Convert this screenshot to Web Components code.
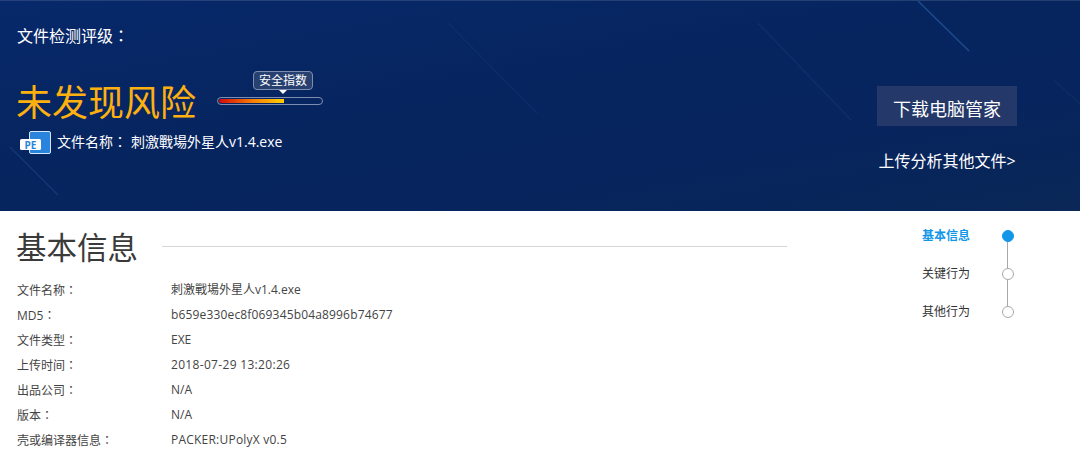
<!DOCTYPE html>
<html lang="zh-CN"><head><meta charset="utf-8"><title>文件检测</title>
<style>
html,body{margin:0;padding:0;background:#fff;overflow:hidden}
body{width:1080px;height:454px;font-family:"Open Sans","Noto Sans CJK SC",sans-serif;color:#333}
</style></head><body>
<report-page>
  <report-hero slot="hero" level="未发现风险" file="刺激戰場外星人v1.4.exe"></report-hero>
  <info-section slot="main" heading="基本信息">
    <info-row label="文件名称">刺激戰場外星人v1.4.exe</info-row>
    <info-row label="MD5" style="letter-spacing:.16px">b659e330ec8f069345b04a8996b74677</info-row>
    <info-row label="文件类型">EXE</info-row>
    <info-row label="上传时间" style="letter-spacing:.32px">2018-07-29 13:20:26</info-row>
    <info-row label="出品公司">N/A</info-row>
    <info-row label="版本">N/A</info-row>
    <info-row label="壳或编译器信息" style="letter-spacing:.22px">PACKER:UPolyX v0.5</info-row>
  </info-section>
  <step-nav slot="nav">
    <step-item active>基本信息</step-item>
    <step-item>关键行为</step-item>
    <step-item last>其他行为</step-item>
  </step-nav>
</report-page>
<script>
function def(name,html,init){
  customElements.define(name,class extends HTMLElement{
    constructor(){super();this.attachShadow({mode:'open'}).innerHTML=html;}
    connectedCallback(){if(init)init(this,this.shadowRoot);}
  });
}
const colon='font-family:"Noto Sans CJK TC",sans-serif;letter-spacing:0';
def('report-page',`<style>
:host{display:block;width:1080px;height:454px;overflow:hidden}
.body{display:flex;height:243px}
.main{width:787px}
.nav{margin-left:135px}
</style><slot name="hero"></slot><div class="body"><div class="main"><slot name="main"></slot></div><div class="nav"><slot name="nav"></slot></div></div>`);

def('report-hero',`<style>
:host{display:block;position:relative;height:211px;box-sizing:border-box;color:#fff;overflow:hidden;
background:linear-gradient(170deg,#07286a 0%,#06255f 45%,#07245e 70%,#0a2757 100%);box-shadow:inset 0 1px 0 rgba(255,255,255,.12)}
.bg{position:absolute;left:0;top:0}
.wrap{position:relative;display:flex;justify-content:space-between;height:100%;box-sizing:border-box;padding:0 63px 0 17px}
.t{font-size:16px;line-height:20px;padding-top:25px}
.c{${colon}}
.lvl{display:flex;margin-top:28px;height:58px}
.name{font-size:36px;line-height:58px;color:#feb00f;width:200px;margin-left:-1px;white-space:nowrap}
.meter{position:relative;width:106px;height:8px;margin:23px 0 0 1px;border:1px solid #7d8db0;border-radius:5px;box-sizing:border-box;padding:1px}
.fill{width:65px;height:100%;background:linear-gradient(90deg,#d40a0a,#f77a05 50%,#ffd000);border-radius:2px 0 0 2px}
.tip{position:absolute;left:35px;top:-27px;width:60px;height:19px;box-sizing:border-box;border:1px solid #7d8db0;border-radius:4px;background:#27406f;font-size:12px;line-height:17px;text-align:center;white-space:nowrap}
.tip:after{content:"";position:absolute;left:25px;top:18px;border:4px solid transparent;border-top-color:#fff;border-bottom:0}
.file{display:flex;align-items:center;margin-top:-2px;font-size:14px;height:24px;padding-left:2px}
.file svg{margin-right:6px;flex:none}
.file span.s{padding-bottom:2px}
.lab{margin-right:4px;white-space:nowrap}
.r{width:140px;display:flex;flex-direction:column;align-items:center;padding-top:86px}
.btn{width:140px;height:40px;background:#25386a;font-size:18px;line-height:46px;text-align:center;white-space:nowrap}
.up{font-size:16px;margin-top:25px;line-height:20px;white-space:nowrap}
</style>
<svg class="bg" width="1080" height="211" fill="none" stroke-width="1.5"><path d="M918 1 969 51" stroke="#1d4a8c"/><path d="M448 23 537 113" stroke="#123670" opacity=".5"/><path d="M758 23 851 120" stroke="#123670" opacity=".6"/><path d="M10 147 58 195" stroke="#1b3f7c" opacity=".7"/><path d="M1054 80 1080 104" stroke="#123670" opacity=".5"/></svg>
<div class="wrap"><div>
<div class="t">文件检测评级<span class="c" lang="zh-TW">：</span></div>
<div class="lvl"><div class="name" id="n"></div><div class="meter"><div class="fill"></div><div class="tip">安全指数</div></div></div>
<div class="file"><svg width="32" height="24" viewBox="0 0 32 24"><rect x="10.5" y="1.5" width="21" height="22" rx="1.5" fill="#2a83dc" stroke="#d5e8fa"/><rect x="1" y="9" width="21" height="11" rx="1.5" fill="#fff"/><text x="11.5" y="18.5" text-anchor="middle" font-size="10" font-weight="700" fill="#2a83dc" font-family="Open Sans">PE</text></svg><span class="lab s">文件名称<span class="c" lang="zh-TW">：</span></span><span class="s" id="f"></span></div>
</div>
<div class="r"><div class="btn">下载电脑管家</div><div class="up">上传分析其他文件&gt;</div></div>
</div>`,(h,s)=>{s.getElementById('n').textContent=h.getAttribute('level');s.getElementById('f').textContent=h.getAttribute('file');});

def('info-section',`<style>
:host{display:block;padding:16px 0 0 17px}
.h{display:flex;align-items:center;height:40px;margin-bottom:10px}
h2{margin:0 0 0 -1px;width:122px;font-size:30.5px;font-weight:400;color:#3a3a3a;line-height:40px;white-space:nowrap;flex:none}
.line{flex:1;height:1px;background:#d6d6d6;margin:0 0 2px 24px}
</style><div class="h"><h2 id="h"></h2><div class="line"></div></div><slot></slot>`,(h,s)=>{s.getElementById('h').textContent=h.getAttribute('heading');});

def('info-row',`<style>
:host{display:grid;grid-template-columns:154px 1fr;height:25px;line-height:25px;font-size:12px;color:#444}
.l{letter-spacing:0;white-space:nowrap}
.c{${colon}}
</style><div class="l"><span id="l"></span><span class="c" lang="zh-TW">：</span></div><div><slot></slot></div>`,(h,s)=>{s.getElementById('l').textContent=h.getAttribute('label');});

def('step-nav',`<style>:host{display:block;padding-top:6px;width:100px}</style><slot></slot>`);

def('step-item',`<style>
:host{display:flex;height:38px;align-items:flex-start;font-size:12px;color:#333;position:relative}
:host([active]){color:#1296e8;font-weight:700}
.txt{width:80px;line-height:38px;white-space:nowrap}
.c{position:relative;width:12px;height:38px}
.d{position:absolute;left:0;top:13px;width:12px;height:12px;box-sizing:border-box;border:1px solid #a8a8a8;border-radius:50%;background:#fff}
:host([active]) .d{background:#1296e8;border-color:#1296e8}
.l{position:absolute;left:5px;top:25px;width:1px;height:26px;background:#a8a8a8}
:host([last]) .l{display:none}
</style><div class="txt"><slot></slot></div><div class="c"><div class="d"></div><div class="l"></div></div>`);
</script>
</body></html>
